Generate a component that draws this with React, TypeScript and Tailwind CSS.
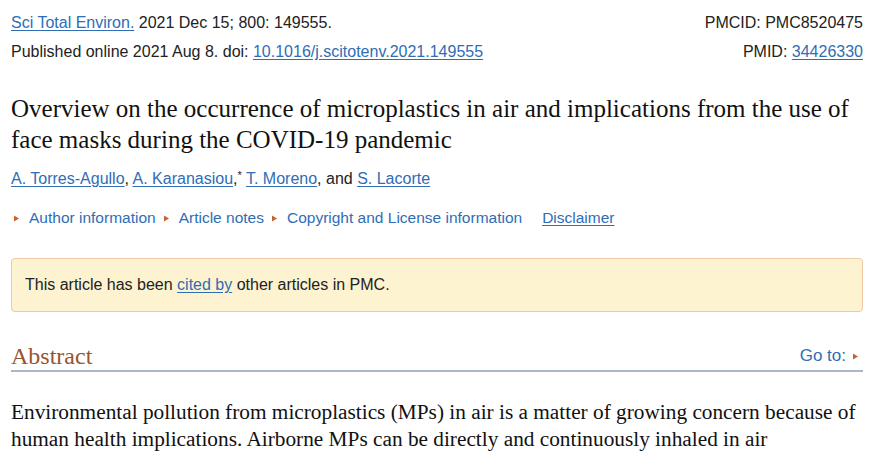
const sans = "font-['Liberation_Sans',Arial,sans-serif]";
const serif = "font-['Liberation_Serif','Times_New_Roman',serif]";
const link = "text-[#2f6db5] underline underline-offset-2";

function Tri({ className = "" }: { className?: string }) {
  return (
    <svg width="5" height="7" viewBox="0 0 5 7" className={`inline-block ${className}`}>
      <path d="M0 0.5 L5 3.5 L0 6.5 Z" fill="#c8622e" />
    </svg>
  );
}

export default function App() {
  const notes = ["Author information", "Article notes", "Copyright and License information"];
  return (
    <div className={`min-h-screen bg-white pl-[11px] pr-[14px] pt-[8px] text-[#222] ${sans}`}>
      <div className="flex justify-between text-[16px] leading-[29px]">
        <div>
          <div>
            <a className={link}>Sci Total Environ.</a> 2021 Dec 15; 800: 149555.
          </div>
          <div>
            Published online 2021 Aug 8. doi: <a className={link}>10.1016/j.scitotenv.2021.149555</a>
          </div>
        </div>
        <div className="text-right">
          <div>PMCID: PMC8520475</div>
          <div>
            PMID: <a className={link}>34426330</a>
          </div>
        </div>
      </div>

      <h1 className={`mt-[27px] text-[25px] leading-[31px] text-[#111] ${serif}`}>
        Overview on the occurrence of microplastics in air and implications from the use of face masks during the
        COVID-19 pandemic
      </h1>

      <div className="mt-[13px] text-[16px] leading-[22px]">
        <a className={link}>A. Torres-Agullo</a>, <a className={link}>A. Karanasiou</a>,
        <sup className="text-[11px]">*</sup> <a className={link}>T. Moreno</a>, and{" "}
        <a className={link}>S. Lacorte</a>
      </div>

      <div className="mt-[17px] flex items-center pl-[3px] text-[15.5px] leading-[22px] text-[#2f6db5]">
        {notes.map((n) => (
          <span key={n} className="flex items-center mr-[8px]">
            <Tri className="mr-[10px]" />
            {n}
          </span>
        ))}
        <a className={`${link} ml-[12px]`}>Disclaimer</a>
      </div>

      <div className="mt-[29px] rounded-[4px] border border-[#efc9a4] bg-[#fdf3d1] px-[13px] py-[14px] text-[16px] leading-[24px]">
        This article has been <a className={link}>cited by</a> other articles in PMC.
      </div>

      <div className="mt-[30px] flex items-end justify-between border-b-2 border-[#a6b8cb]">
        <h2 className={`text-[24px] leading-[28px] text-[#98542f] ${serif}`}>Abstract</h2>
        <span className="flex items-center text-[17px] leading-[28px] text-[#2f6db5] pr-[5px]">
          Go to:
          <Tri className="ml-[7px]" />
        </span>
      </div>

      <p className={`mt-[27px] text-[21.3px] leading-[26.5px] text-[#111] ${serif}`}>
        Environmental pollution from microplastics (MPs) in air is a matter of growing concern because of human
        health implications. Airborne MPs can be directly and continuously inhaled in air
      </p>
    </div>
  );
}
